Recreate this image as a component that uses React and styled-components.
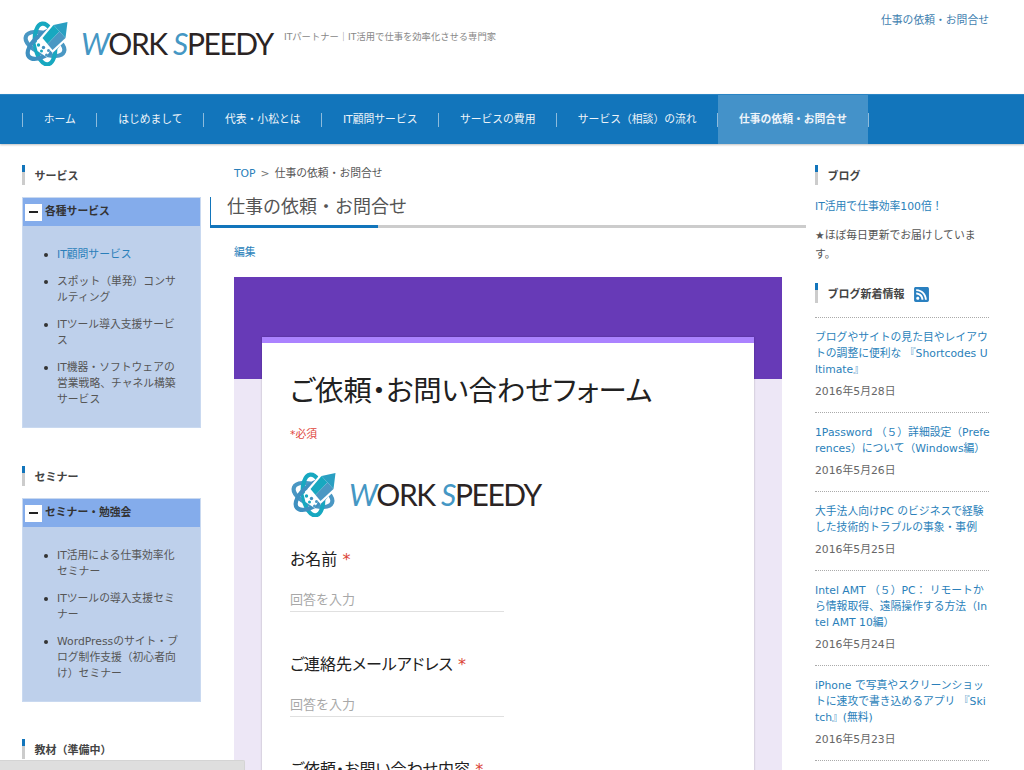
import React from 'react'
import styled, { createGlobalStyle } from 'styled-components'
import { FaRssSquare } from 'react-icons/fa'

const navItems = ['ホーム', 'はじめまして', '代表・小松とは', 'IT顧問サービス', 'サービスの費用', 'サービス（相談）の流れ', '仕事の依頼・お問合せ']

const services = [
  { text: 'IT顧問サービス', link: true },
  { text: 'スポット（単発）コンサルティング' },
  { text: 'ITツール導入支援サービス' },
  { text: 'IT機器・ソフトウェアの営業戦略、チャネル構築サービス' },
]

const seminars = [
  { text: 'IT活用による仕事効率化セミナー' },
  { text: 'ITツールの導入支援セミナー' },
  { text: 'WordPressのサイト・ブログ制作支援（初心者向け）セミナー' },
]

// the blog titles break mid-word in the original, so the lines are kept as they are
const posts = [
  { title: 'ブログやサイトの見た目やレイアウ\nトの調整に便利な 『Shortcodes U\nltimate』', date: '2016年5月28日' },
  { title: '1Password （５）詳細設定（Prefe\nrences）について（Windows編）', date: '2016年5月26日' },
  { title: '大手法人向けPC のビジネスで経験\nした技術的トラブルの事象・事例', date: '2016年5月25日' },
  { title: 'Intel AMT （５）PC： リモートか\nら情報取得、遠隔操作する方法（In\ntel AMT 10編）', date: '2016年5月24日' },
  { title: 'iPhone で写真やスクリーンショッ\nトに速攻で書き込めるアプリ 『Ski\ntch』(無料)', date: '2016年5月23日' },
]

function LogoMark() {
  return (
    <MarkSvg viewBox="0 0 46 46" aria-hidden="true">
      <g fill="none" strokeWidth="4.2">
        <ellipse cx="22.500" cy="24" rx="20.500" ry="10" stroke="#4a97c3" transform="rotate(22 22.500 24)" />
        <ellipse cx="22.500" cy="24" rx="20.500" ry="10" stroke="#17a8c0" transform="rotate(82 22.500 24)" />
        <ellipse cx="22.500" cy="24" rx="20.500" ry="10" stroke="#3f90c0" transform="rotate(142 22.500 24)" />
      </g>
      <path d="M17 18 L30 3 L47 1 L45 19 L30 33 Z" fill="#fff" />
      <path d="M13 23 L18 19 L28 30 L24 37 L15 31 Z" fill="#fff" />
      <path d="M20 18 L31 5 L37 11.500 L25 24 Z" fill="#17a8c0" />
      <path d="M25 24 L37 11.500 L43 18 L30 30 Z" fill="#4a97c3" />
      <path d="M31 5 L45 2 L43 18 Z" fill="#2a9fc2" />
      <circle cx="16" cy="25" r="1.700" fill="#17a8c0" />
      <circle cx="21" cy="27.500" r="1.700" fill="#3f90c0" />
      <circle cx="26" cy="30.500" r="1.500" fill="#4a97c3" />
      <circle cx="19" cy="31" r="1.500" fill="#17a8c0" />
      <circle cx="24" cy="35" r="1.500" fill="#4a97c3" />
    </MarkSvg>
  )
}

function Logo() {
  return (
    <LogoRow>
      <LogoMark />
      <Wordmark>
        <b>W</b>ORK <b>S</b>PEEDY
      </Wordmark>
    </LogoRow>
  )
}

function Accordion({ label, items }) {
  return (
    <AccordionBox>
      <AccordionHead>
        <MinusBox><i /></MinusBox>
        {label}
      </AccordionHead>
      <AccordionList>
        {items.map((item) => (
          <AccordionItem key={item.text} $link={item.link}>{item.text}</AccordionItem>
        ))}
      </AccordionList>
    </AccordionBox>
  )
}

export default function App() {
  return (
    <Page>
      <GlobalStyle />
      <Header>
        <Logo />
        <Tagline>ITパートナー｜IT活用で仕事を効率化させる専門家</Tagline>
        <TopLink>仕事の依頼・お問合せ</TopLink>
      </Header>

      <Nav>
        <NavSep />
        {navItems.map((item, i) => (
          <React.Fragment key={item}>
            <NavItem $active={i === navItems.length - 1}>{item}</NavItem>
            <NavSep />
          </React.Fragment>
        ))}
      </Nav>

      <Columns>
        <LeftCol>
          <WidgetTitle $gap={12}>サービス</WidgetTitle>
          <Accordion label="各種サービス" items={services} />
          <WidgetTitle $gap={12} $top={38}>セミナー</WidgetTitle>
          <Accordion label="セミナー・勉強会" items={seminars} />
          <WidgetTitle $top={37}>教材（準備中）</WidgetTitle>
        </LeftCol>

        <MainCol>
          <Breadcrumb>
            <a>TOP</a>
            <span>&gt;</span>
            仕事の依頼・お問合せ
          </Breadcrumb>
          <PageTitle>仕事の依頼・お問合せ</PageTitle>
          <EditLink>編集</EditLink>

          <FormFrame>
            <FormCard>
              <FormTitle>ご依頼・お問い合わせフォーム</FormTitle>
              <Required>*必須</Required>
              <FormLogo><Logo /></FormLogo>
              <QuestionLabel>お名前 <em>*</em></QuestionLabel>
              <AnswerLine>回答を入力</AnswerLine>
              <QuestionLabel>ご連絡先メールアドレス <em>*</em></QuestionLabel>
              <AnswerLine>回答を入力</AnswerLine>
              <QuestionLabel>ご依頼・お問い合わせ内容 <em>*</em></QuestionLabel>
            </FormCard>
          </FormFrame>
        </MainCol>

        <RightCol>
          <WidgetTitle>ブログ</WidgetTitle>
          <BlogLink>IT活用で仕事効率100倍！</BlogLink>
          <BlogNote>★ほぼ毎日更新でお届けしています。</BlogNote>
          <WidgetTitle $top={19}>
            ブログ新着情報
            <RssIcon />
          </WidgetTitle>
          <PostList>
            {posts.map((post) => (
              <Post key={post.title}>
                <PostTitle>{post.title}</PostTitle>
                <PostDate>{post.date}</PostDate>
              </Post>
            ))}
          </PostList>
        </RightCol>
      </Columns>

      <StatusBubble />
    </Page>
  )
}

const GlobalStyle = createGlobalStyle`
  html, body {
    margin: 0;
    background: #fff;
  }
  body {
    font-family: "DejaVu Sans", "Noto Sans CJK JP", sans-serif;
    font-size: 10.8px;
    line-height: 16px;
    color: #555;
  }
`

const Page = styled.div`
  position: relative;
  width: 1024px;
  height: 770px;
  overflow: hidden;
`

const Header = styled.header`
  display: flex;
  height: 94px;
  padding: 20px 35px 0 22px;
  box-sizing: border-box;
`

const LogoRow = styled.div`
  display: flex;
  align-items: center;
  gap: 12px;
  height: 46px;
`

const MarkSvg = styled.svg`
  width: 47px;
  height: 46px;
  flex: none;
`

const Wordmark = styled.div`
  font-family: "Lato", sans-serif;
  font-size: 30px;
  line-height: 46px;
  letter-spacing: -1.4px;
  color: #2b2424;
  white-space: nowrap;

  b {
    font-weight: 400;
    font-style: italic;
    color: #4597c4;
  }
`

const Tagline = styled.div`
  margin: 9px 0 0 11px;
  font-size: 9.3px;
  line-height: 16px;
  color: #888;
`

const TopLink = styled.a`
  margin: -9px 0 0 auto;
  padding-top: 2px;
  line-height: 16px;
  color: #3f7fb0;
`

const Nav = styled.nav`
  display: flex;
  align-items: stretch;
  height: 50px;
  padding-left: 22px;
  background: #1275bb;
  border-top: 1px solid #2a85c5;
  box-sizing: border-box;
  box-shadow: 0 1px 2px rgba(0, 0, 0, 0.25);
  position: relative;
`

const NavSep = styled.span`
  align-self: center;
  width: 1px;
  height: 14px;
  background: #8dbbdc;
`

const NavItem = styled.a`
  display: flex;
  align-items: center;
  padding: 0 20.7px;
  font-weight: ${(p) => (p.$active ? 700 : 400)};
  color: #eef4f9;
  background: ${(p) => (p.$active ? '#4492c9' : 'transparent')};
  white-space: nowrap;
`

const Columns = styled.div`
  display: flex;
  gap: 9px;
  padding-left: 22px;
`

const LeftCol = styled.aside`
  width: 179px;
  padding-top: 21px;
  flex: none;
`

const WidgetTitle = styled.h3`
  display: flex;
  align-items: center;
  height: 20px;
  margin: ${(p) => p.$top || 0}px 0 ${(p) => p.$gap || 0}px;
  padding: 3px 0 0 9.5px;
  box-sizing: border-box;
  border-left: 3px solid;
  border-image: linear-gradient(#1275bb 35%, #ccc 35%) 1;
  font-size: 11px;
  font-weight: 700;
  color: #444;
`

const AccordionBox = styled.div`
  background: #bed0eb;
  border: 1px solid #c9d9f0;
  box-sizing: border-box;
  padding-bottom: 8px;
`

const AccordionHead = styled.div`
  display: flex;
  align-items: center;
  gap: 3px;
  height: 28px;
  padding-left: 2px;
  background: #84aceb;
  font-weight: 700;
  color: #333;
`

const MinusBox = styled.span`
  display: flex;
  align-items: center;
  justify-content: center;
  width: 17px;
  height: 17px;
  background: #fff;

  i {
    display: block;
    width: 9px;
    height: 2px;
    background: #222;
  }
`

const AccordionList = styled.ul`
  margin: 21px 0 0;
  padding: 0 20px 0 34px;
  list-style: none;
`

const AccordionItem = styled.li`
  position: relative;
  margin-bottom: 11px;
  color: ${(p) => (p.$link ? '#2a7fba' : '#555')};
  word-break: break-all;

  &::before {
    content: '';
    position: absolute;
    left: -13px;
    top: 6px;
    width: 4px;
    height: 4px;
    border-radius: 50%;
    background: #333;
  }
`

const MainCol = styled.main`
  width: 596px;
  flex: none;
`

const Breadcrumb = styled.div`
  display: flex;
  gap: 5px;
  margin: 22px 0 0 24px;
  color: #555;

  a {
    color: #2a7fba;
  }
  span {
    color: #777;
  }
`

const PageTitle = styled.h1`
  height: 28px;
  margin: 15px 0 0;
  padding-left: 16px;
  border-left: 1px solid #333;
  border-bottom: 3px solid;
  border-image: linear-gradient(90deg, #1275bb 168px, #ccc 168px) 1;
  font-size: 18px;
  font-weight: 400;
  line-height: 19px;
  color: #555;
`

const EditLink = styled.a`
  display: block;
  margin: 17px 0 0 24px;
  color: #2a7fba;
`

const FormFrame = styled.section`
  width: 548px;
  height: 500px;
  margin: 16px 0 0 24px;
  padding: 60px 28px 0;
  box-sizing: border-box;
  background: linear-gradient(#673ab7 102px, #ede7f6 102px);
`

const FormCard = styled.div`
  height: 500px;
  padding: 29px 28px 0;
  background: #fff;
  border-top: 6px solid #ab82ff;
  box-shadow: 0 0 2px rgba(0, 0, 0, 0.25);
  color: #212121;
`

const FormTitle = styled.h2`
  margin: 0;
  font-family: "Roboto", "Noto Sans CJK JP", sans-serif;
  font-size: 28.4px;
  font-weight: 400;
  line-height: 40px;
  font-feature-settings: "palt" 1;
  color: #212121;
`

const Required = styled.div`
  margin-top: 15px;
  color: #e0453a;
`

const FormLogo = styled.div`
  margin: 28px 0 31px;
`

const QuestionLabel = styled.div`
  font-size: 16px;
  line-height: 24px;
  font-feature-settings: "palt" 1;
  color: #212121;

  em {
    font-style: normal;
    color: #db4437;
  }
`

const AnswerLine = styled.div`
  width: 214px;
  height: 22px;
  margin: 17px 0 41px;
  border-bottom: 1px solid #e0e0e0;
  font-size: 13px;
  line-height: 22px;
  color: #a8a8a8;
`

const RightCol = styled.aside`
  width: 174px;
  padding-top: 21px;
  flex: none;
`

const BlogLink = styled.a`
  display: block;
  margin-top: 14px;
  color: #2a7fba;
`

const BlogNote = styled.p`
  margin: 11px 0 0;
  line-height: 19px;
  color: #555;
`

const RssIcon = styled(FaRssSquare)`
  width: 17px;
  height: 17px;
  margin-left: 8px;
  color: #2a80c0;
`

const PostList = styled.div`
  margin-top: 14px;
  border-top: 1px dotted #aaa;
`

const Post = styled.div`
  padding: 12px 0 12px;
  border-bottom: 1px dotted #aaa;
`

const PostTitle = styled.a`
  display: block;
  color: #2a7fba;
  white-space: pre;
`

const PostDate = styled.div`
  margin-top: 6px;
  color: #666;
`

const StatusBubble = styled.div`
  position: absolute;
  left: 0;
  bottom: 0;
  width: 245px;
  height: 10px;
  background: #dedede;
  border-top: 1px solid #d4d4d4;
  border-right: 1px solid #d4d4d4;
  border-top-right-radius: 2px;
  box-sizing: border-box;
`
